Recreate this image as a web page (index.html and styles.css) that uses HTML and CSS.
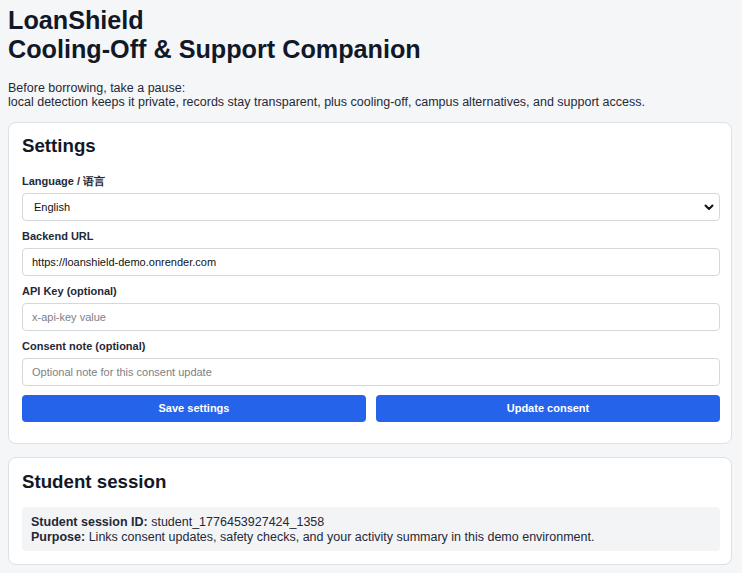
FILE: index.html
```html
<!DOCTYPE html>
<html lang="en">
<head>
<meta charset="utf-8">
<title>LoanShield</title>
<link rel="stylesheet" href="styles.css">
</head>
<body>
<div class="page">
  <h1 class="title">LoanShield<br>Cooling-Off &amp; Support Companion</h1>
  <p class="intro">Before borrowing, take a pause:<br>local detection keeps it private, records stay transparent, plus cooling-off, campus alternatives, and support access.</p>

  <section class="card">
    <h2 class="card-title">Settings</h2>
    <div class="field">
      <label class="label">Language / 语言</label>
      <div class="select-wrap">
        <select class="input select">
          <option>English</option>
          <option>中文</option>
        </select>
        <svg class="chevron" width="10" height="7" viewBox="0 0 10 7"><path d="M1.5 1.5 L5 5 L8.5 1.5" fill="none" stroke="#111" stroke-width="2" stroke-linecap="round" stroke-linejoin="round"/></svg>
      </div>
    </div>
    <div class="field">
      <label class="label">Backend URL</label>
      <input class="input" type="text" value="https://loanshield-demo.onrender.com">
    </div>
    <div class="field">
      <label class="label">API Key (optional)</label>
      <input class="input" type="text" placeholder="x-api-key value">
    </div>
    <div class="field">
      <label class="label">Consent note (optional)</label>
      <input class="input" type="text" placeholder="Optional note for this consent update">
    </div>
    <div class="actions">
      <button class="btn">Save settings</button>
      <button class="btn">Update consent</button>
    </div>
  </section>

  <section class="card session-card">
    <h2 class="card-title">Student session</h2>
    <div class="session-box">
      <div><strong>Student session ID:</strong> student_1776453927424_1358</div>
      <div><strong>Purpose:</strong> Links consent updates, safety checks, and your activity summary in this demo environment.</div>
    </div>
  </section>
</div>
</body>
</html>
```
FILE: styles.css
```css
* { box-sizing: border-box; }
html, body {
  margin: 0;
  background: #f5f6f8;
}
body {
  font-family: "Liberation Sans", Arial, sans-serif;
  font-size: 12.5px;
  color: #1f2937;
}
.page {
  padding: 6px 10px 8px 8px;
}
.title {
  margin: 0;
  font-size: 25.2px;
  line-height: 29px;
  font-weight: 700;
  color: #111827;
}
.intro {
  margin: 17px 0 12px;
  line-height: 14.4px;
  color: #1f2937;
}
.card {
  background: #fff;
  border: 1px solid #dde0e5;
  border-radius: 8px;
  padding: 11.5px 11px 21px 13px;
  margin-bottom: 13px;
}
.card-title {
  margin: 0 0 17px;
  font-size: 18.7px;
  line-height: 23px;
  font-weight: 700;
  color: #111827;
}
.field {
  display: flex;
  flex-direction: column;
  margin-bottom: 8px;
}
.label {
  font-size: 11px;
  line-height: 14px;
  font-weight: 700;
  color: #1f2937;
  margin-bottom: 4.5px;
}
.input {
  display: block;
  width: 100%;
  height: 28.5px;
  border: 1px solid #d4d7dc;
  border-radius: 4px;
  background: #fff;
  padding: 0 9px;
  font-family: "Liberation Sans", Arial, sans-serif;
  font-size: 11px;
  color: #111;
  outline: none;
}
.input::placeholder {
  color: #7b7f86;
}
.select-wrap {
  position: relative;
}
.select {
  appearance: none;
  -webkit-appearance: none;
  padding-left: 11px;
}
.chevron {
  position: absolute;
  right: 6px;
  top: 11px;
  pointer-events: none;
}
.actions {
  display: grid;
  grid-template-columns: 1fr 1fr;
  gap: 10px;
  padding-top: 0.5px;
}
.btn {
  height: 27px;
  border: none;
  border-radius: 4px;
  background: #2563eb;
  color: #fff;
  font-family: "Liberation Sans", Arial, sans-serif;
  font-size: 11px;
  font-weight: 700;
}
.session-card {
  padding-top: 12.5px;
  padding-bottom: 13px;
}
.session-card .card-title {
  margin-bottom: 14px;
}
.session-box {
  background: #f3f4f6;
  border-radius: 4px;
  padding: 8px 9px 7px;
  line-height: 14.2px;
  color: #1f2937;
}
.session-box strong {
  color: #1f2937;
}
```
